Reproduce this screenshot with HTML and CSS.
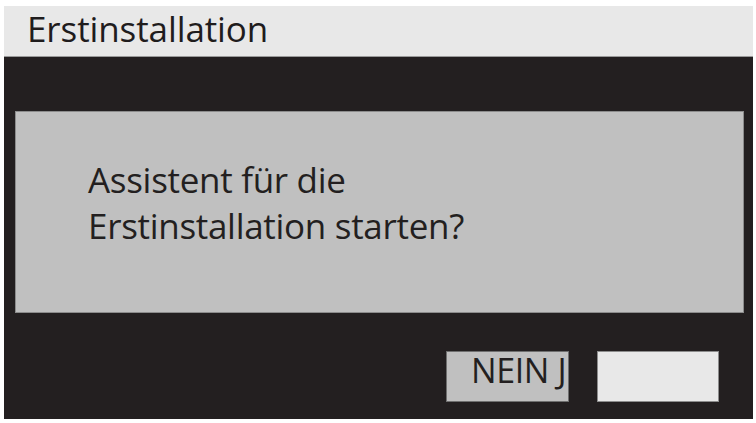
FILE: index.html
```html
<!DOCTYPE html>
<html lang="de">
<head>
<meta charset="utf-8">
<title>Erstinstallation</title>
<link rel="stylesheet" href="styles.css">
</head>
<body>
<div class="screen">
  <div class="header">Erstinstallation</div>
  <div class="main">
    <div class="panel">
      <p class="message">Assistent für die<br>Erstinstallation starten?</p>
    </div>
    <div class="buttons">
      <div class="btn btn-no">NEIN J</div>
      <div class="btn btn-yes"></div>
    </div>
  </div>
</div>
</body>
</html>
```

FILE: styles.css
```css
html, body {
  margin: 0;
  padding: 0;
  background: #ffffff;
}
body {
  font-family: "Open Sans", "Noto Sans", sans-serif;
  color: #231f20;
}
.screen {
  margin: 6px 3px 0 4px;
  width: 749px;
  height: 413px;
  display: flex;
  flex-direction: column;
}
.header {
  height: 51px;
  background: #e8e8e8;
  border-bottom: 1px solid #9a9a9a;
  box-sizing: border-box;
  font-size: 35px;
  line-height: 45px;
  padding-left: 23px;
  letter-spacing: -0.1px;
  color: #1f1c1d;
}
.main {
  flex: 1;
  background: #231f20;
  display: flex;
  flex-direction: column;
  padding: 54px 9px 17px 11px;
}
.panel {
  height: 202px;
  background: #c0c0c0;
  border: 1px solid #8c8c8c;
  box-sizing: border-box;
  padding: 45px 0 0 72px;
}
.message {
  margin: 0;
  font-size: 35px;
  line-height: 46px;
  letter-spacing: -0.3px;
  color: #231f20;
}
.buttons {
  margin-top: 38px;
  display: flex;
  justify-content: flex-end;
  gap: 28px;
  padding-right: 25px;
}
.btn {
  height: 51px;
  width: 123px;
  box-sizing: border-box;
  overflow: hidden;
  white-space: nowrap;
}
.btn-no {
  background: #c0c0c0;
  border: 1px solid #6f6f6f;
  font-size: 34px;
  line-height: 36px;
  padding-left: 24px;
  letter-spacing: -0.4px;
  color: #231f20;
}
.btn-yes {
  width: 122px;
  background: #e8e8e8;
  border: 1px solid #8c8c8c;
}
```
